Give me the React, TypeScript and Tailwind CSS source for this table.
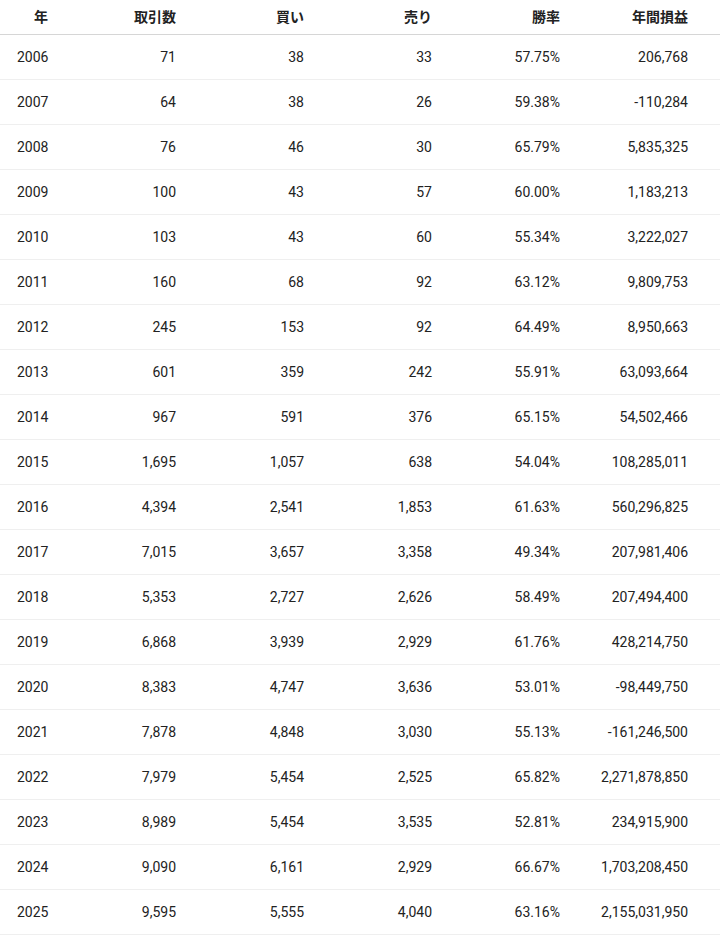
import React from "react";

type Row = [string, string, string, string, string, string];

const rows: Row[] = [
  ["2006", "71", "38", "33", "57.75%", "206,768"],
  ["2007", "64", "38", "26", "59.38%", "-110,284"],
  ["2008", "76", "46", "30", "65.79%", "5,835,325"],
  ["2009", "100", "43", "57", "60.00%", "1,183,213"],
  ["2010", "103", "43", "60", "55.34%", "3,222,027"],
  ["2011", "160", "68", "92", "63.12%", "9,809,753"],
  ["2012", "245", "153", "92", "64.49%", "8,950,663"],
  ["2013", "601", "359", "242", "55.91%", "63,093,664"],
  ["2014", "967", "591", "376", "65.15%", "54,502,466"],
  ["2015", "1,695", "1,057", "638", "54.04%", "108,285,011"],
  ["2016", "4,394", "2,541", "1,853", "61.63%", "560,296,825"],
  ["2017", "7,015", "3,657", "3,358", "49.34%", "207,981,406"],
  ["2018", "5,353", "2,727", "2,626", "58.49%", "207,494,400"],
  ["2019", "6,868", "3,939", "2,929", "61.76%", "428,214,750"],
  ["2020", "8,383", "4,747", "3,636", "53.01%", "-98,449,750"],
  ["2021", "7,878", "4,848", "3,030", "55.13%", "-161,246,500"],
  ["2022", "7,979", "5,454", "2,525", "65.82%", "2,271,878,850"],
  ["2023", "8,989", "5,454", "3,535", "52.81%", "234,915,900"],
  ["2024", "9,090", "6,161", "2,929", "66.67%", "1,703,208,450"],
  ["2025", "9,595", "5,555", "4,040", "63.16%", "2,155,031,950"],
];

const headers = ["取引数", "買い", "売り", "勝率", "年間損益"];

// first column is narrow, the rest share a 128px step; last one carries the right gutter
const gridCols = "grid grid-cols-[64px_128px_128px_128px_128px_144px]";

export default function App() {
  return (
    <div className="min-h-screen w-[720px] bg-white font-['Roboto','Noto_Sans_CJK_JP',sans-serif] text-[14px] text-[#222]">
      <div className={`${gridCols} h-[35px] items-center border-b border-[#d6d6d6] pb-px font-['Noto_Sans','Noto_Sans_CJK_JP',sans-serif] font-bold`}>
        <div className="pl-[34px]">年</div>
        {headers.map((h, i) => (
          <div key={h} className={i === 4 ? "pr-8 text-right" : "pr-4 text-right"}>
            {h}
          </div>
        ))}
      </div>
      {rows.map((r) => (
        <div key={r[0]} className={`${gridCols} h-[45px] items-center border-b border-[#efefef]`}>
          <div className="pl-[17px]">{r[0]}</div>
          {r.slice(1).map((v, i) => (
            <div key={i} className={i === 4 ? "pr-8 text-right" : "pr-4 text-right"}>
              {v}
            </div>
          ))}
        </div>
      ))}
    </div>
  );
}
